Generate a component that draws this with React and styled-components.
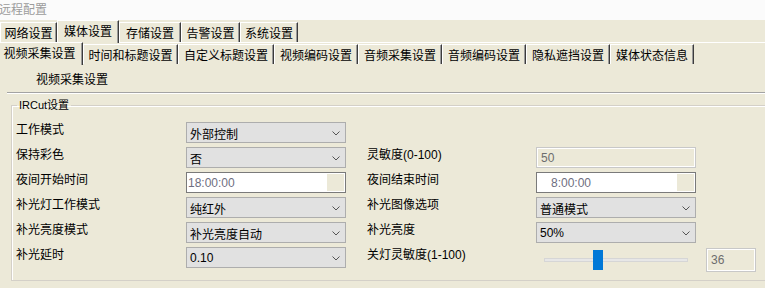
import React from "react"
import styled, { createGlobalStyle } from "styled-components"

const Global = createGlobalStyle`
  html, body {
    margin: 0;
    padding: 0;
    overflow: hidden;
    background: #ece9d8;
    font-family: "Liberation Sans", "Noto Sans CJK SC", sans-serif;
    font-size: 12px;
    color: #000;
  }
`

const Page = styled.div`
  width: 765px;
  height: 288px;
  overflow: hidden;
`

const TitleBar = styled.div`
  box-sizing: border-box;
  height: 20px;
  background: #fbfbfb;
  color: #9c9c9c;
  font-family: "Noto Sans CJK SC", sans-serif;
  font-size: 12px;
  line-height: 14px;
  padding-top: 2px;
  margin-left: -1px;
`

const TabBar = styled.div`
  display: flex;
  align-items: flex-end;
  height: ${p => p.$h}px;
  margin-left: ${p => p.$shift || 0}px;
  border-bottom: ${p => (p.$line ? "1px solid #fff" : "none")};
`

const Tab = styled.div`
  position: relative;
  box-sizing: border-box;
  width: ${p => p.$w}px;
  height: ${p => (p.$active ? p.$h + 1 : p.$h - 2)}px;
  margin-bottom: ${p => (p.$active ? -1 : 0)}px;
  z-index: ${p => (p.$active ? 1 : 0)};
  border-top: 1px solid #fff;
  border-left: 1px solid #fff;
  border-right: 1px solid #3c3c3c;
  box-shadow: inset -1px 0 0 #9a9a9a;
  background: #ece9d8;
  display: flex;
  align-items: center;
  justify-content: center;
  padding-bottom: ${p => (p.$active ? 3 : 0)}px;
  font-family: "Noto Sans CJK SC", sans-serif;
  font-size: 12px;
  white-space: nowrap;
`

const SubHeader = styled.div`
  padding: 6px 0 0 36px;
  height: 22px;
  line-height: 18px;
  font-family: "Noto Sans CJK SC", sans-serif;
`

const Divider = styled.div`
  margin-left: 7px;
  height: 0;
  border-top: 1px solid #a3a3a3;
  border-bottom: 1px solid #fff;
`

const Group = styled.fieldset`
  margin: 4px -12px 0 11px;
  padding: 0 0 12px 4px;
  border: 1px solid #d4d0c8;
  box-shadow: inset 1px 1px 0 #fff;
  min-width: 0;
`

const Legend = styled.legend`
  padding: 0 2px;
  margin-left: 1px;
  font-size: 11px;
  line-height: 14px;
  font-family: "Liberation Sans", "Noto Sans CJK SC", sans-serif;
`

const Grid = styled.div`
  display: grid;
  grid-template-columns: 170px 160px 190px 160px 70px;
  grid-auto-rows: 21px;
  row-gap: 4px;
  margin-top: 10px;
`

const Label = styled.div`
  padding-left: ${p => (p.$right ? 21 : 0)}px;
  line-height: 17px;
  font-size: 12px;
  white-space: nowrap;
  font-family: "Liberation Sans", "Noto Sans CJK SC", sans-serif;
`

const SelectBox = styled.div`
  box-sizing: border-box;
  height: 21px;
  border: 1px solid #adadad;
  background: #e1e1e1;
  display: flex;
  align-items: center;
  justify-content: space-between;
  padding: 1px 5px 0 3px;
  font-size: 12px;
`

const TimeBox = styled.div`
  box-sizing: border-box;
  height: 21px;
  border: 1px solid #7a7a7a;
  background: #fff;
  display: flex;
  align-items: stretch;
  padding: 1px 1px 1px ${p => p.$pad}px;
`

const TimeText = styled.span`
  flex: 1;
  display: flex;
  align-items: center;
  color: #6e6e80;
  font-size: 12px;
`

const Spin = styled.span`
  width: 17px;
  background: #ece9d8;
`

const Disabled = styled.div`
  box-sizing: border-box;
  height: ${p => p.$h || 21}px;
  width: ${p => p.$w || 160}px;
  margin-top: ${p => p.$top || 0}px;
  margin-left: ${p => p.$left || 0}px;
  border: 1px solid #c8c8c8;
  box-shadow: inset 0 0 0 1px #fff;
  background: #ece9d8;
  color: #6d6d6d;
  display: flex;
  align-items: center;
  padding-left: 4px;
  font-size: 12px;
`

const SliderWrap = styled.div`
  height: 20px;
  margin-top: 3px;
  padding: 0 8px;
  display: flex;
  align-items: center;
`

const Track = styled.div`
  position: relative;
  flex: 1;
  height: 2px;
  background: #e7e7e7;
  border: 1px solid #d6d6d6;
`

const Thumb = styled.div`
  position: absolute;
  top: -9px;
  width: 10px;
  height: 20px;
  background: #0078d7;
`

const Chevron = () => (
  <svg width="8" height="5" viewBox="0 0 8 5">
    <polyline points="0.5,0.5 4,4 7.5,0.5" fill="none" stroke="#555" strokeWidth="1" />
  </svg>
)

const Select = ({ value }) => (
  <SelectBox>
    <span>{value}</span>
    <Chevron />
  </SelectBox>
)

const Time = ({ value, pad }) => (
  <TimeBox $pad={pad}>
    <TimeText>{value}</TimeText>
    <Spin />
  </TimeBox>
)

const Slider = ({ value, min, max }) => {
  const pct = (value - min) / (max - min)
  return (
    <SliderWrap>
      <Track>
        <Thumb style={{ left: `${Math.round(pct * 134) + 1}px` }} />
      </Track>
    </SliderWrap>
  )
}

const topTabs = [
  { t: "网络设置", w: 57 },
  { t: "媒体设置", w: 62, active: true },
  { t: "存储设置", w: 62 },
  { t: "告警设置", w: 59 },
  { t: "系统设置", w: 58 },
]

const subTabs = [
  { t: "视频采集设置", w: 87, active: true },
  { t: "时间和标题设置", w: 95 },
  { t: "自定义标题设置", w: 96 },
  { t: "视频编码设置", w: 84 },
  { t: "音频采集设置", w: 84 },
  { t: "音频编码设置", w: 84 },
  { t: "隐私遮挡设置", w: 84 },
  { t: "媒体状态信息", w: 84 },
]

export default function App() {
  return (
    <Page>
      <Global />
      <TitleBar>远程配置</TitleBar>
      <TabBar $h={22} $line>
        {topTabs.map(tab => (
          <Tab key={tab.t} $w={tab.w} $h={22} $active={tab.active}>
            {tab.t}
          </Tab>
        ))}
      </TabBar>
      <TabBar $h={21} $shift={-4}>
        {subTabs.map(tab => (
          <Tab key={tab.t} $w={tab.w} $h={22} $active={tab.active}>
            {tab.t}
          </Tab>
        ))}
      </TabBar>
      <SubHeader>视频采集设置</SubHeader>
      <Divider />
      <Group>
        <Legend>IRCut设置</Legend>
        <Grid>
          <Label>工作模式</Label>
          <Select value="外部控制" />
          <span />
          <span />
          <span />

          <Label>保持彩色</Label>
          <Select value="否" />
          <Label $right>灵敏度(0-100)</Label>
          <Disabled>50</Disabled>
          <span />

          <Label>夜间开始时间</Label>
          <Time value="18:00:00" pad={1} />
          <Label $right>夜间结束时间</Label>
          <Time value="8:00:00" pad={14} />
          <span />

          <Label>补光灯工作模式</Label>
          <Select value="纯红外" />
          <Label $right>补光图像选项</Label>
          <Select value="普通模式" />
          <span />

          <Label>补光亮度模式</Label>
          <Select value="补光亮度自动" />
          <Label $right>补光亮度</Label>
          <Select value="50%" />
          <span />

          <Label>补光延时</Label>
          <Select value="0.10" />
          <Label $right>关灯灵敏度(1-100)</Label>
          <Slider value={36} min={1} max={100} />
          <Disabled $w={50} $h={24} $top={1} $left={10}>36</Disabled>
        </Grid>
      </Group>
    </Page>
  )
}
